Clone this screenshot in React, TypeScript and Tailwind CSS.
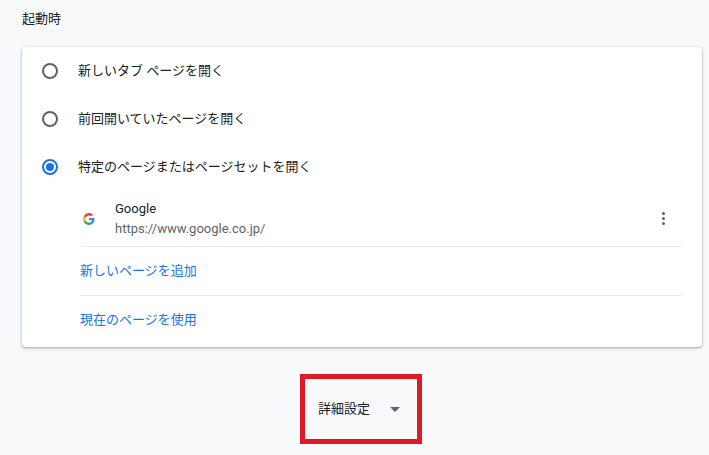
export default function App() {
  const font = { fontFamily: '"Roboto","Noto Sans CJK JP",sans-serif' };
  const Radio = ({ on }: { on?: boolean }) => (
    <div className={`w-[16px] h-[16px] rounded-full border-2 flex items-center justify-center ${on ? "border-[#1a73e8]" : "border-[#5f6368]"}`}>
      {on && <div className="w-[8px] h-[8px] rounded-full bg-[#1a73e8]" />}
    </div>
  );
  return (
    <div className="w-[709px] h-[455px] bg-[#f8f9fa] overflow-hidden text-[13px] text-[#202124]" style={font}>
      <div className="pl-[22px] pt-[9px] h-[47px] text-[13px]">起動時</div>
      <div className="mx-[22px] w-[680px] h-[300px] bg-white rounded-[4px] shadow-[0_1px_2px_rgba(60,64,67,0.3),0_1px_3px_1px_rgba(60,64,67,0.15)]">
        {["新しいタブ ページを開く", "前回開いていたページを開く", "特定のページまたはページセットを開く"].map((t, i) => (
          <div key={t} className="flex items-center h-[48px] pl-[20px]" style={{ paddingTop: i === 0 ? 0 : 0 }}>
            <Radio on={i === 2} />
            <span className="ml-[20px]">{t}</span>
          </div>
        ))}
        <div className="ml-[59px] mr-[20px]">
          <div className="flex items-center h-[56px] border-b border-[#e8eaed]">
            <svg width="12" height="12" viewBox="0 0 48 48" className="ml-[2px]">
              <path fill="#EA4335" d="M24 9.5c3.5 0 6.6 1.2 9.1 3.6l6.8-6.8C35.8 2.4 30.3 0 24 0 14.6 0 6.6 5.4 2.7 13.3l7.9 6.1C12.5 13.6 17.8 9.5 24 9.5z"/>
              <path fill="#4285F4" d="M46.1 24.5c0-1.6-.1-3.1-.4-4.5H24v9h12.4c-.5 2.9-2.2 5.3-4.6 7l7.5 5.8c4.4-4 6.8-10 6.8-17.3z"/>
              <path fill="#FBBC05" d="M10.5 28.6c-.5-1.4-.8-3-.8-4.6s.3-3.2.8-4.6l-7.9-6.1C1 16.6 0 20.2 0 24s1 7.4 2.7 10.7l7.8-6.1z"/>
              <path fill="#34A853" d="M24 48c6.5 0 11.9-2.1 15.9-5.8l-7.5-5.8c-2.1 1.4-4.8 2.3-8.4 2.3-6.2 0-11.5-4.1-13.4-9.8l-7.9 6.1C6.6 42.6 14.6 48 24 48z"/>
            </svg>
            <div className="ml-[20px] flex-1 leading-[20px]">
              <div>Google</div>
              <div className="text-[#5f6368]">https://www.google.co.jp/</div>
            </div>
            <div className="flex flex-col gap-[2px] mr-[17px]">
              <div className="w-[3px] h-[3px] rounded-full bg-[#5f6368]" />
              <div className="w-[3px] h-[3px] rounded-full bg-[#5f6368]" />
              <div className="w-[3px] h-[3px] rounded-full bg-[#5f6368]" />
            </div>
          </div>
          <div className="h-[49px] flex items-center text-[#1a73e8] border-b border-[#e8eaed] -ml-[1px]">新しいページを追加</div>
          <div className="h-[48px] flex items-center text-[#1a73e8] -ml-[1px]">現在のページを使用</div>
        </div>
      </div>
      <div className="ml-[300px] mt-[27px] w-[122px] h-[70px] border-[5px] border-[#e01a24] flex items-center pl-[13px]">
        <span>詳細設定</span>
        <span className="ml-[20px] w-0 h-0 border-l-[5px] border-r-[5px] border-t-[5px] border-l-transparent border-r-transparent border-t-[#5f6368]" />
      </div>
    </div>
  );
}
